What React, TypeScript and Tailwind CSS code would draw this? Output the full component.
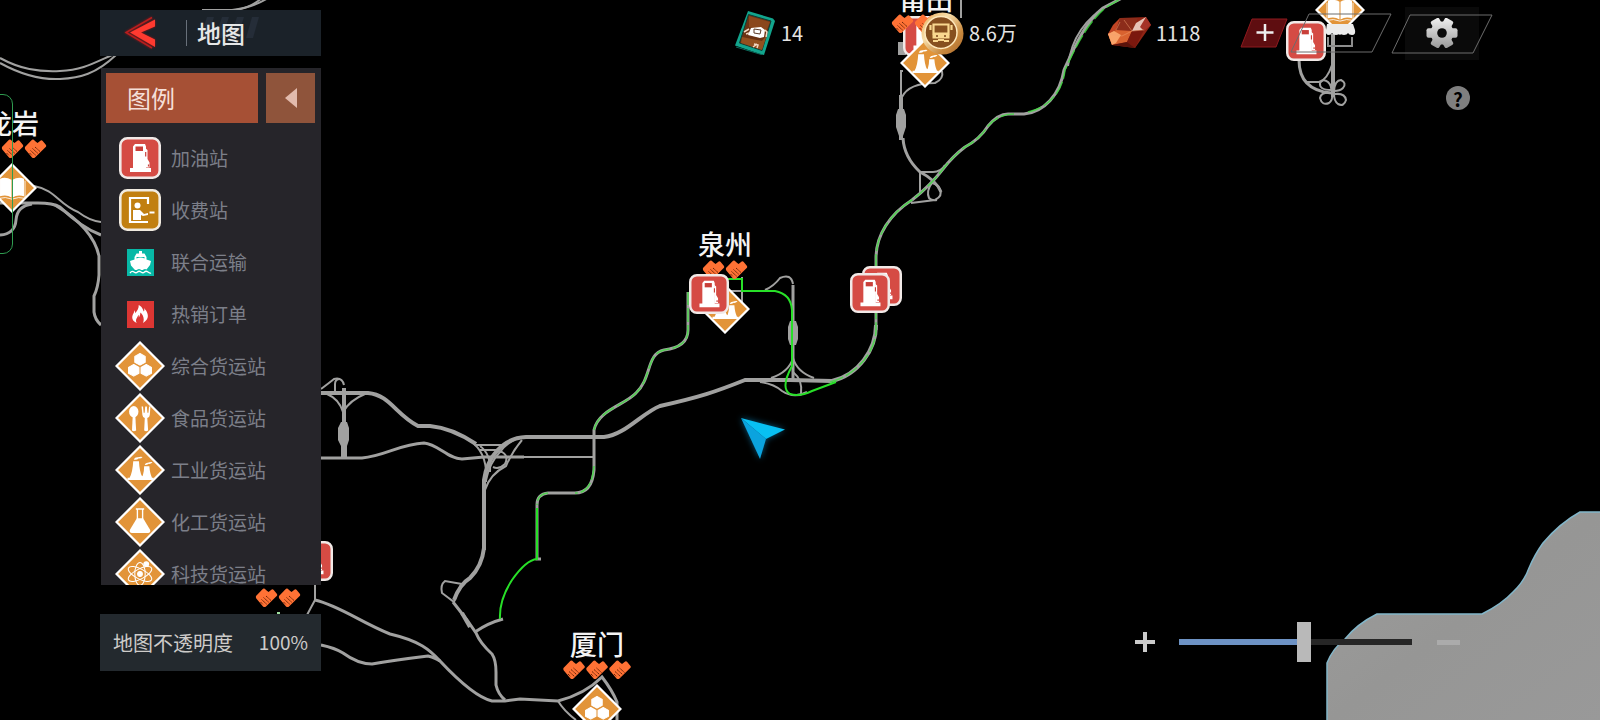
import { useState, type CSSProperties, type ReactNode } from 'react'
import { ImFire } from 'react-icons/im'

type Kind = 'mixed' | 'food' | 'industry' | 'chemical' | 'tech' | 'book'

const glyphs: Record<Kind, ReactNode> = {
  mixed: (
    <g fill="#fff">
      <path d="m24 12 5 2.800v5.600l-5 2.800-5-2.800v-5.600z" stroke="#fff" strokeLinejoin="round" />
      <path d="m18 22.500 5 2.800v5.600l-5 2.800-5-2.800v-5.600z" stroke="#fff" strokeLinejoin="round" />
      <path d="m30 22.500 5 2.800v5.600l-5 2.800-5-2.800v-5.600z" stroke="#fff" strokeLinejoin="round" />
    </g>
  ),
  food: (
    <g fill="#fff">
      <ellipse cx="18" cy="18" rx="4.500" ry="5.500" />
      <path d="M17 22h2.500l.8 14q-2.200 1.500-4 0z" />
      <path d="M25.500 13h1.400l.6 6h1l.5-6h1.600l.5 6h1l.6-6H34l-.6 8q-.3 2.500-2.400 3l.8 12q-2 1.500-3.800 0l.6-12q-2-.5-2.300-3z" />
    </g>
  ),
  industry: (
    <g fill="#fff">
      <path d="M17.500 15.500h5.500q.5 10 3 14.500l.7-.8q1.300-4 1.300-8.700h5q.5 7 2.500 11H37v2H12v-2h2q3-6 3.500-16z" />
      <path d="M18 14q1-2.500 4-2.200 2-.8 4.500-.3-1.200 1.800-4 1.500Q21 14.800 18 14zM28.500 19q1-2.200 3-2 2-.9 4.500-.6-1 2-3.500 1.700-1.500 1.300-4 .9z" />
    </g>
  ),
  chemical: (
    <g>
      <path d="M20 11.500h8M21.500 12v9M26.500 12v9" stroke="#fff" strokeWidth="1.300" fill="none" />
      <path d="M21 20.500h6l6.800 11.300q.6 2.700-2 2.700H16.200q-2.600 0-2-2.700z" fill="#fff" />
    </g>
  ),
  tech: (
    <g fill="none" stroke="#fff" strokeWidth="1">
      <ellipse cx="24" cy="24" rx="12.500" ry="4.800" transform="rotate(28 24 24)" />
      <ellipse cx="24" cy="24" rx="12.500" ry="4.800" transform="rotate(-28 24 24)" />
      <ellipse cx="24" cy="24" rx="11" ry="5" transform="rotate(90 24 24)" />
      <circle cx="24" cy="24" r="2.300" fill="#fff" />
      <circle cx="30" cy="14.500" r="2.300" fill="#fff" />
    </g>
  ),
  book: (
    <g fill="#fff">
      <path d="M23.500 16q-5.500-3-11-1v17q6-2 11 1zM24.500 16q5.500-3 11-1v17q-6-2-11 1z" />
      <path d="M11.500 17v17q6-2 12.500.7 6.500-2.700 12.500-.7V17" fill="none" stroke="#fff" strokeWidth=".8" />
    </g>
  ),
}

function Diamond({ kind }: { kind: Kind }) {
  return (
    <svg width="50" height="50" viewBox="0 0 48 48" className="block shrink-0" aria-hidden="true">
      <path d="M24 1.500 46.500 24 24 46.500 1.500 24z" fill="#e29439" stroke="#fff" strokeWidth="2.200" />
      {glyphs[kind]}
    </svg>
  )
}

function Fuel({ size = 40 }: { size?: number }) {
  return (
    <svg width={size} height={size} viewBox="0 0 42 42" className="block shrink-0" aria-hidden="true">
      <rect x="1.300" y="1.300" width="39.400" height="39.400" rx="7" fill="#d54b44" stroke="#f1e9e7" strokeWidth="2.600" />
      <path d="M14 9.500 16 7h10l1 2.500V31h5v4H11v-4h3z" fill="#fff" />
      <path d="M16.500 9.500h7.500v4.500h-7.500z" fill="#c93f39" />
      <path d="M25.500 10.500 28.500 13v9l2 3.500v5h-4V12z" fill="#fff" />
      <path d="M26.700 15v4.500M29.500 27.500v2" stroke="#c93f39" strokeWidth="1.200" />
    </svg>
  )
}

function Toll() {
  return (
    <svg width="42" height="42" viewBox="0 0 42 42" className="block shrink-0" aria-hidden="true">
      <rect x="1.300" y="1.300" width="39.400" height="39.400" rx="7" fill="#c17f10" stroke="#f1ebe0" strokeWidth="2.600" />
      <path d="M29 15V9H11v24h18" fill="none" stroke="#fff" strokeWidth="2.200" />
      <circle cx="18.500" cy="16.500" r="3" fill="#fff" />
      <path d="M14 21h7l4 4 4-1v2l-5 1-2-1v5h-8z" fill="#fff" />
      <path d="M30.500 22.500h5v2h-5z" fill="#fff" />
    </svg>
  )
}

function Ship() {
  return (
    <svg width="27" height="27" viewBox="0 0 27 27" className="block shrink-0" aria-hidden="true">
      <path d="M0 0h27v27H0z" fill="#07b8a6" />
      <path d="M12 2h3v2.500h2.500l2 3.500v2.500l4.500 1.500-1 4-3.500 4.500q-1.500-1-3 0t-3 0-3 0-3 0L4 16.500 3 12l4.500-1.500V8l2-3.500H12z" fill="#fff" />
      <path d="M9.500 9.500q4-2 8 0V8h-8z" fill="#07b8a6" />
      <path d="M3 24q2-2.500 4-1t3.500 0 3.500 0 3.500 0 3.500 0 3 1" fill="none" stroke="#fff" strokeWidth="1.300" />
    </svg>
  )
}

function Handshake() {
  return (
    <svg width="22" height="20" viewBox="0 0 22 20" className="block" aria-hidden="true">
      <path d="M.5 8 7 1.200Q8.500-.3 10.500 2l2.500 2 3.200-2.500q1-.6 2 .4l3.300 4.200q.8 1-.3 2L10.500 18.500q-1.500 1.200-3 0L.8 10.500q-.8-1-.3-2.500z" fill="#ff7235" />
      <path d="m8 9.500 5.500 5M6 11.500l5.500 5M10.500 8l5 4.500M5 14l2.500 2.500" stroke="#6b2408" strokeWidth="1" strokeDasharray="1.400 .4" />
    </svg>
  )
}

const roads: { w: number; d: string[] }[] = [
  {
    w: 2,
    d: [
      // west coast loops
      'M0 58C20 69 38 72 60 71S92 64 112 55', 'M0 63C20 74 40 80 60 79S96 74 116 55',
      'M202 10h30Q252 8 268-2', 'M236 10Q250 8 262-2',
      'M34 186C56 190 58 204 78 212Q90 221 101 222',
      // western interchange
      'M321 389Q329 383 334 379Q342 377 344 385', 'M335 392v-8q0-5 5-5', 'M327 394q12 5 16 18q7-12 22-18',
      // centre interchange
      'M476 445h28', 'M480 450h18', 'M474 444q14 12 12 38', 'M480 446q11 8 10 26',
      'M485 490Q490 474 506 466Q512 452 522 440', 'M491 458q4-8 11-6q7 4 3 12q-6 6-12 3', 'M486 480Q490 462 500 452Q506 444 514 440',
      'M462 584l-17-3q-5 4-3 12l12 9q2-8 7-17', 'M521 457h73', 'M558 701q6 10 18 19',
      // Quanzhou
      'M742 277v28', 'M728 291h20', 'M765 290Q774 286 780 278Q791 273 793 284',
      'M793 358q-4 14-22 20', 'M793 358q4 14 21 20', 'M760 382q14 2 22 9q12 8 25 1', 'M793 372q10 8 8 22',
      // Putian
      'M961 0v18', 'M903 71h-2v25', 'M942 71q2 8-7 12q-26 0-33 14',
      'M919 172h14q8 0 12-7', 'M920 172v22', 'M911 203l24-3q8-4 5-11q-3-5-8-6q-6 8-3 15q3 3 8 2',
      // clover, north east
      'M1305 82h14q8-2 13-17',
      'M1331 90Q1319 90 1320 83Q1323 78 1328 82Q1332 86 1331 91', 'M1334 91Q1335 80 1341 80Q1347 83 1343 88Q1340 91 1334 91',
      'M1331 93Q1321 92 1320 98Q1322 106 1329 103Q1333 100 1332 94', 'M1335 94Q1345 93 1346 100Q1344 107 1338 104Q1334 101 1334 94',
      'M1068 66C1071 40 1085 18 1110 4',
      'M315 585v15l-8 15',
    ],
  },
  {
    w: 3,
    d: [
      'M0 203h38q15 0 22 4Q82 228 101 235', 'M55 205Q93 228 99 256V275Q98 288 94 296V312Q95 320 101 325',
      'M32 204Q17 206 16 220T0 235',
      'M321 458H362C385 456 400 444 424 443C438 444 448 459 462 459L484 457H524',
      'M321 645Q335 648 343 653Q358 664 372 664Q395 660 428 656Q436 658 440 661',
      'M315 600C340 606 360 622 390 634C420 641 430 650 440 661C455 677 475 697 492 701H505L520 699L558 701Q585 694 602 677Q612 690 617 702V720',
      'M453 602L467 620L476 633Q480 643 492 654Q496 660 496 672V685Q498 694 505 700',
      'M475 632Q488 623 503 619',
      'M594 445V470Q592 493 575 493H548Q537 494 537 505V559H541',
      'M594 445V430C598 410 625 405 636 393C652 378 646 354 664 350Q688 347 688 330V292',
      'M793 285V380', 'M903 138Q904 157 920 172Q936 180 941 192', 'M1299 60Q1299 90 1331 93',
      'M876 330V258C876 235 890 214 912 200Q930 186 943 169Q953 156 965 147Q980 139 988 126Q998 114 1008 114H1024C1044 112 1060 95 1064 70C1074 48 1085 22 1103 8L1122-2',
    ],
  },
  {
    w: 4,
    d: [
      'M321 393H368C390 395 395 414 418 426H430Q452 428 476 444',
      'M344 388V458', 'M484 550V480C487 458 502 438 526 437H604C625 435 642 413 660 406C700 397 715 392 745 380H790L832 381',
      'M484 548Q482 566 470 578Q460 584 454 600',
      'M832 381C858 375 876 350 876 325', 'M1333 34V97', 'M901 95v45', 'M462 613l8 14',
    ],
  },
]

const plazas = [
  'M341 422h6l2 6v12l-2 6v12h-6v-12l-3-6v-12z',
  'M790 321h6l2 6v12l-2 6h-6l-2-6v-12z',
  'M898 109h6l2 6v12l-3 9h-4l-3-9v-12z',
  'M898 42h8v13h-8z',
]

// sections the route shares with a road, the road shows through
const sharedRoute = [
  'M594 430C598 410 625 405 636 393C652 378 646 354 664 350Q688 347 688 330V292',
  'M830 382C858 375 876 350 876 330V258C876 235 890 214 912 200Q930 186 943 169Q953 156 965 147Q980 139 988 126Q998 114 1014 114',
  'M1028 112C1046 108 1062 95 1065 70C1076 46 1087 24 1105 8L1122-2',
  'M594 466Q592 493 575 493', 'M548 493Q537 494 537 505',
]

const route = [
  'M500 619Q499 600 512 580Q526 560 537 559V508',
  'M725 279H742V291H775Q791 294 792 310V366Q780 388 790 394Q800 397 812 391L836 382',
]

function Terrain() {
  return (
    <svg width="1600" height="720" viewBox="0 0 1600 720" className="block" aria-hidden="true">
      <defs>
        <linearGradient id="land" x1="0" y1="0" x2="1" y2="1">
          <stop offset="0" stopColor="#9d9d9c" />
          <stop offset=".5" stopColor="#969695" />
          <stop offset="1" stopColor="#999" />
        </linearGradient>
      </defs>
      <path
        d="M1327 722V663Q1333 648 1345 639Q1357 624 1377 614H1482Q1502 604 1513 592Q1524 582 1529 568Q1535 554 1543 543Q1560 523 1580 512H1602V722z"
        fill="url(#land)" stroke="#83b6c9" strokeWidth="1.500"
      />
      {roads.map(r => (
        <g key={r.w} fill="none" stroke="#a1a1a0" strokeWidth={r.w}>
          {r.d.map(d => <path key={d} d={d} />)}
        </g>
      ))}
      {plazas.map(d => <path key={d} d={d} fill="#a1a1a0" />)}
      <g fill="none" stroke="#3fdc3f" strokeWidth="1.600" strokeOpacity=".8" strokeDasharray="14 3">
        {sharedRoute.map(d => <path key={d} d={d} />)}
      </g>
      <g fill="none" stroke="#28e028" strokeWidth="2">
        {route.map(d => <path key={d} d={d} />)}
      </g>
      <path d="M277 613h3" stroke="#9fe09f" strokeWidth="2" />
    </svg>
  )
}

type Pin = { x: number; y: number; node: ReactNode }

const shakes = (n: number) => (
  <div className="flex gap-px">
    {Array.from({ length: n }, (_, i) => <Handshake key={i} />)}
  </div>
)

const cityName = (name: string) => (
  <span className="block whitespace-nowrap text-[27px] leading-8 font-medium text-[#f4f4f4]">{name}</span>
)

// x / y is the centre of each pin, later ones lie on top
const pins: Pin[] = [
  { x: 12, y: 123, node: cityName('龙岩') },
  { x: 24, y: 149, node: shakes(2) },
  { x: 12, y: 188, node: <Diamond kind="book" /> },
  { x: 926, y: -1, node: cityName('莆田') },
  { x: 923, y: 36, node: <Fuel /> },
  { x: 914, y: 24, node: shakes(2) },
  { x: 925, y: 63, node: <Diamond kind="industry" /> },
  { x: 725, y: 244, node: cityName('泉州') },
  { x: 725, y: 270, node: shakes(2) },
  { x: 725, y: 309, node: <Diamond kind="industry" /> },
  { x: 709, y: 294, node: <Fuel /> },
  { x: 882, y: 286, node: <Fuel /> },
  { x: 870, y: 293, node: <Fuel /> },
  { x: 313, y: 561, node: <Fuel /> },
  { x: 278, y: 598, node: shakes(2) },
  { x: 597, y: 644, node: cityName('厦门') },
  { x: 597, y: 670, node: shakes(3) },
  { x: 597, y: 709, node: <Diamond kind="mixed" /> },
  { x: 1340, y: 10, node: <Diamond kind="book" /> },
  { x: 1306, y: 41, node: <Fuel /> },
]

function PlayerArrow() {
  return (
    <svg width="52" height="52" viewBox="0 0 52 52" className="block drop-shadow-[0_0_3px_#06587c]" aria-hidden="true">
      <path d="M3 4 47 15.500 28 25z" fill="#08c0f3" />
      <path d="M3 4 28 25 22 45z" fill="#0ba3de" />
    </svg>
  )
}

function WorldMap() {
  return (
    <div className="absolute inset-0 overflow-hidden">
      <Terrain />
      {pins.map((p, i) => (
        <div key={i} className="absolute -translate-x-1/2 -translate-y-1/2" style={{ left: p.x, top: p.y }}>
          {p.node}
        </div>
      ))}
      <div className="absolute" style={{ left: 738, top: 414 }}>
        <PlayerArrow />
      </div>
      <div className="absolute top-[94px] -left-5 h-[160px] w-[33px] rounded-[10px] border border-[#2f9c50]" />
    </div>
  )
}

const legend: { label: string; icon: ReactNode }[] = [
  { label: '加油站', icon: <Fuel size={42} /> },
  { label: '收费站', icon: <Toll /> },
  { label: '联合运输', icon: <Ship /> },
  {
    label: '热销订单',
    icon: <span className="flex size-[27px] items-center justify-center bg-[#dc3633] text-white"><ImFire size={18} /></span>,
  },
  { label: '综合货运站', icon: <Diamond kind="mixed" /> },
  { label: '食品货运站', icon: <Diamond kind="food" /> },
  { label: '工业货运站', icon: <Diamond kind="industry" /> },
  { label: '化工货运站', icon: <Diamond kind="chemical" /> },
  { label: '科技货运站', icon: <Diamond kind="tech" /> },
]

function Sidebar() {
  return (
    <aside className="ml-[100px] flex w-[221px] shrink-0 flex-col pt-[10px] pb-[49px]">
      <header className="flex h-[46px] shrink-0 items-center bg-[#1b2229]">
        <button aria-label="返回" className="ml-[22px] block">
          <svg width="36" height="38" viewBox="0 0 36 38" className="block drop-shadow-[0_0_1px_#a01414]" aria-hidden="true">
            <path d="M30 3.500 4 18.500 30 34" fill="none" stroke="#b81f1f" strokeWidth="1.500" />
            <path d="M33 5.500 8 18.500 33 33V25.500L19 18.500 33 12.500z" fill="#ff3a30" />
          </svg>
        </button>
        <div className="ml-7 h-[26px] w-px bg-[#68707a]" />
        <div className="relative ml-[10px]">
          <svg width="64" height="22" viewBox="0 0 64 22" className="absolute top-0 left-0" aria-hidden="true">
            <path d="M10 0h7l-7 21H3zM25 0h7l-7 21h-7zM40 0h7l-7 21h-7zM55 0h7l-6 21h-7z" fill="#252d38" />
          </svg>
          <h1 className="relative text-2xl leading-8 font-medium text-[#e6e7e7]">地图</h1>
        </div>
      </header>

      <section className="mt-3 ml-px flex min-h-0 flex-1 flex-col overflow-hidden bg-[#26252a]">
        <div className="flex shrink-0 gap-2 p-[5px] pr-[6px]">
          <button className="h-[50px] flex-1 bg-[#a65035] pl-[21px] text-left text-2xl text-[#f5dfd8]">图例</button>
          <button aria-label="收起" className="flex h-[50px] w-[49px] items-center justify-center bg-[#8f543b]">
            <svg width="12" height="20" viewBox="0 0 12 20" aria-hidden="true">
              <path d="M12 0v20L0 10z" fill="#e2bbad" />
            </svg>
          </button>
        </div>
        <ul className="mt-1">
          {legend.map(l => (
            <li key={l.label} className="flex h-[52px] items-center pl-[14px]">
              <span className="flex w-[50px] shrink-0 justify-center">{l.icon}</span>
              <span className="ml-[6px] text-[19px] whitespace-nowrap text-[#7c7f89]">{l.label}</span>
            </li>
          ))}
        </ul>
      </section>

      <div className="mt-[29px] flex h-[57px] shrink-0 items-center justify-between bg-[#23292e] px-[13px] text-[#cdcbc9]">
        <span className="text-[20px]">地图不透明度</span>
        <span className="text-[19px]">100%</span>
      </div>
    </aside>
  )
}

function CardIcon() {
  return (
    <svg width="40" height="44" viewBox="0 0 40 44" className="block" aria-hidden="true">
      <path d="M13 0 38 7.500 40 10 29 44 25 43 0 34.500z" fill="#12a58d" />
      <path d="M13.500 3.500 36 10 27 39.500 4.500 32z" fill="#6b3212" stroke="#0b3f36" />
      <path d="m14 5 21 6-4 10-17-5z" fill="#8a471c" />
      <path d="m7 26 20 4 5-6-5 15-21-7z" fill="#93501f" />
      <path d="m16 17 10-1 4 3-1 7-4 1-12-3z" fill="#fff" />
      <path d="m19 18 7 1-1 4-6-1z" fill="none" stroke="#5c3b28" strokeWidth="1" />
      <path d="m9 21 5-3M11 23l3-1M30 19l2 2-1 5M19 33l4 1-1 3M22 33l-4 3" fill="none" stroke="#f2d9c4" strokeWidth="1.500" />
      <path d="m1 36 27 8" stroke="#0b6b5c" strokeWidth="1" />
    </svg>
  )
}

function CoinIcon() {
  return (
    <svg width="43" height="43" viewBox="0 0 43 43" className="block" aria-hidden="true">
      <defs>
        <linearGradient id="rim" x1="0" y1="0" x2="1" y2="1">
          <stop offset="0" stopColor="#e8ab55" />
          <stop offset=".35" stopColor="#f8deaa" />
          <stop offset=".7" stopColor="#c98a3f" />
          <stop offset="1" stopColor="#a9652a" />
        </linearGradient>
      </defs>
      <circle cx="21.500" cy="21.500" r="21" fill="url(#rim)" />
      <circle cx="20" cy="20.500" r="16" fill="#87501f" stroke="#ffe9bd" strokeWidth="1.500" />
      <path d="M12.500 12.500h15v9h-15zM9.500 13v5M30.500 13v5" fill="none" stroke="#f9d78f" strokeWidth="2.200" />
      <path d="M11.500 22h17v4.500h-17z" fill="#f9d78f" />
      <path d="M15 24h2M23 24h2" stroke="#7a431a" strokeWidth="1.500" />
      <path d="M12 29h5M23 29h5M17 28h6" fill="none" stroke="#f9d78f" strokeWidth="2" />
    </svg>
  )
}

function GemIcon() {
  return (
    <svg width="43" height="32" viewBox="0 0 43 32" className="block" aria-hidden="true">
      <path d="M12 1 38 0 43 8 27 31 4 28 0 17z" fill="#8f2414" />
      <path d="m12 1-4 12-8 4 5-9z" fill="#c04424" />
      <path d="M12 1h18l-6 13-16-1z" fill="#8c2c1a" />
      <path d="m38 0-10 6-4 8 12-1z" fill="#e6c3b6" />
      <path d="m38 0 5 8-7 6-4-4z" fill="#a53327" />
      <path d="m8 13 16 1-5 11-15 3-4-11z" fill="#d9622f" />
      <path d="m6 14 7 4-5 8-4 2-4-11z" fill="#f9a469" />
      <path d="m24 14 12-1-9 18-8-6z" fill="#7b180e" />
      <path d="m4 28 15-3 8 6z" fill="#5a120a" />
      <path d="m16 3 8 11M8 13l4-8M0 17l14 2 10-5 12-1" fill="none" stroke="#f0a070" strokeWidth=".5" />
    </svg>
  )
}

function Gear() {
  return (
    <svg width="32" height="30" viewBox="-16 -15 32 30" className="block" aria-hidden="true">
      <defs>
        <linearGradient id="steel" x1="0" y1="0" x2="0" y2="1">
          <stop offset="0" stopColor="#f0f0f0" />
          <stop offset="1" stopColor="#9a9a9a" />
        </linearGradient>
        <mask id="teeth">
          <circle r="11.500" fill="#fff" />
          <rect x="-15.500" y="-4.800" width="31" height="9.600" rx="2" fill="#fff" />
          <rect x="-15.500" y="-4.800" width="31" height="9.600" rx="2" fill="#fff" transform="rotate(60)" />
          <rect x="-15.500" y="-4.800" width="31" height="9.600" rx="2" fill="#fff" transform="rotate(120)" />
          <circle r="4.800" fill="#000" />
        </mask>
      </defs>
      <rect x="-16" y="-15" width="32" height="30" fill="url(#steel)" mask="url(#teeth)" />
    </svg>
  )
}

function Amount({ icon, value, className }: { icon: ReactNode; value: string; className: string }) {
  return (
    <div className={`flex items-center ${className}`}>
      {icon}
      <span className="text-[20px] text-[#e4e4e4]">{value}</span>
    </div>
  )
}

function TopBar() {
  return (
    <div className="flex items-start justify-end pr-[108px]">
      <div className="flex h-[66px] items-center">
        <Amount icon={<CardIcon />} value="14" className="w-[186px] gap-[6px]" />
        <Amount icon={<CoinIcon />} value="8.6万" className="w-[187px] gap-[5px]" />
        <Amount icon={<GemIcon />} value="1118" className="w-[132px] gap-[5px]" />
        <button aria-label="购买钻石" className="block w-[50px]">
          <svg width="48" height="30" viewBox="0 0 48 30" className="block" aria-hidden="true">
            <path d="M12 1h35L36 29H1z" fill="#5e0d10" stroke="#8e1a1e" />
            <path d="M25 6v17M16.500 14.500h17" stroke="#eee" strokeWidth="2.500" />
          </svg>
        </button>
        <button aria-label="商店" className="block w-[101px]">
          <svg width="102" height="40" viewBox="0 0 102 40" className="block" aria-hidden="true">
            <path d="M19 1h82L82 39H1z" fill="none" stroke="#6c6c6c" />
            <path d="M38 24v9h24v-9" fill="none" stroke="#8d8d8d" strokeWidth="2" />
            <path d="M37 11h26l2 6q1 5-3 5-3 0-4-2-1 2-4 2t-4-2q-1 2-4 2t-4-2q-1 2-3 2-4 0-3-5z" fill="#ececec" />
          </svg>
        </button>
        <button aria-label="设置" className="relative block w-[101px]">
          <div className="mx-auto h-[53px] w-[74px] bg-[#0a0a0a]" />
          <svg width="102" height="40" viewBox="0 0 102 40" className="absolute top-[7px] left-0" aria-hidden="true">
            <path d="M19 1h82L82 39H1z" fill="none" stroke="#6c6c6c" />
          </svg>
          <div className="absolute inset-0 flex items-center justify-center">
            <Gear />
          </div>
        </button>
      </div>
    </div>
  )
}

function ZoomBar() {
  const [zoom, setZoom] = useState(54)
  return (
    <div className="flex items-center justify-end pr-[140px] pb-[58px]">
      <button aria-label="放大" className="mr-6" onClick={() => setZoom(z => Math.max(0, z - 5))}>
        <svg width="20" height="20" viewBox="0 0 20 20" className="block" aria-hidden="true">
          <path d="M10 0v20M0 10h20" stroke="#cbcbcb" strokeWidth="4" />
        </svg>
      </button>
      <input
        type="range"
        aria-label="缩放"
        value={zoom}
        onChange={e => setZoom(Number(e.target.value))}
        style={{ '--fill': `${zoom}%` } as CSSProperties}
        className="block h-10 w-[233px] appearance-none bg-transparent [&::-webkit-slider-runnable-track]:h-[6px] [&::-webkit-slider-runnable-track]:bg-[linear-gradient(to_right,#6d92c4_var(--fill),#262626_var(--fill))] [&::-webkit-slider-thumb]:-mt-[17px] [&::-webkit-slider-thumb]:h-10 [&::-webkit-slider-thumb]:w-[14px] [&::-webkit-slider-thumb]:appearance-none [&::-webkit-slider-thumb]:bg-[#b9b9b9]"
      />
      <button aria-label="缩小" className="ml-[25px] py-2" onClick={() => setZoom(z => Math.min(100, z + 5))}>
        <span className="block h-[5px] w-[23px] bg-[#ababab]" />
      </button>
    </div>
  )
}

export default function App() {
  return (
    <div className="relative h-screen overflow-hidden bg-black font-['Noto_Sans_CJK_SC',sans-serif]">
      <WorldMap />
      <div className="relative flex h-full">
        <Sidebar />
        <main className="flex min-w-0 flex-1 flex-col">
          <TopBar />
          <div className="flex justify-end pt-5 pr-[130px]">
            <button aria-label="帮助" className="flex size-6 items-center justify-center rounded-full bg-[#7f7f7f] text-[19px] leading-none font-bold text-black">
              ?
            </button>
          </div>
          <div className="mt-auto">
            <ZoomBar />
          </div>
        </main>
      </div>
    </div>
  )
}
